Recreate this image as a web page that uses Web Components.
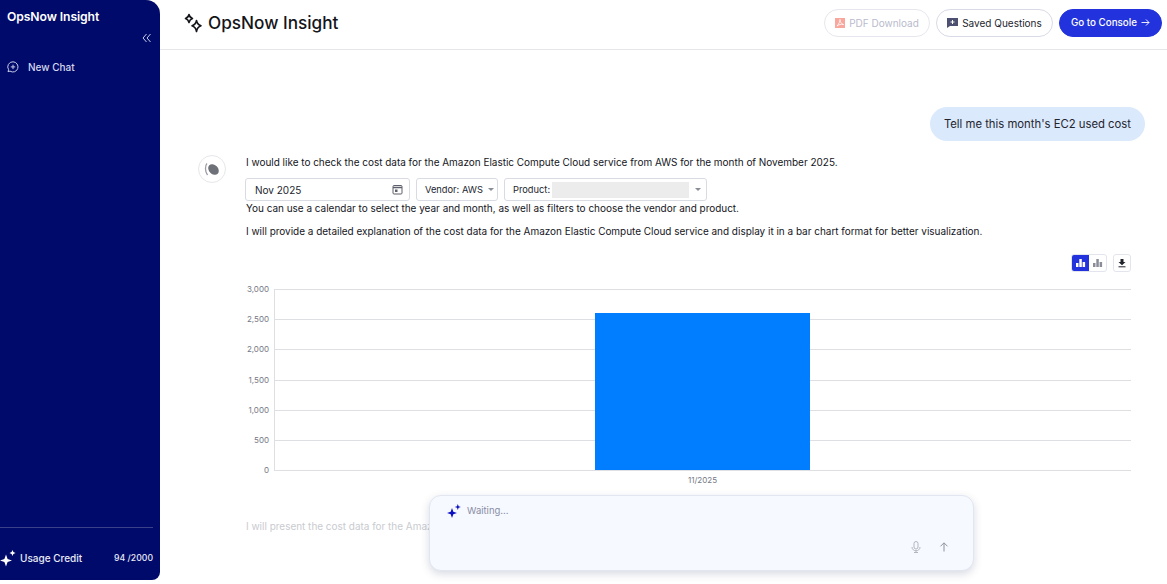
<!DOCTYPE html>
<html lang="en"><head><meta charset="utf-8"><title>OpsNow Insight</title>
<style>
html,body{margin:0;padding:0;background:#fff;width:1167px;height:584px;overflow:hidden;font-family:Inter,"Liberation Sans",sans-serif}
ops-app{display:flex;width:1167px;height:584px}
</style></head><body>
<ops-app>
  <ops-sidebar slot="side"></ops-sidebar>
  <ops-header slot="head"></ops-header>
  <user-bubble slot="body">Tell me this month's EC2 used cost</user-bubble>
  <assistant-message slot="body">
    <p class="x">I would like to check the cost data for the Amazon Elastic Compute Cloud service from AWS for the month of November 2025.</p>
    <filter-bar></filter-bar>
    <p>You can use a calendar to select the year and month, as well as filters to choose the vendor and product.</p>
    <p style="margin-top:9px">I will provide a detailed explanation of the cost data for the Amazon Elastic Compute Cloud service and display it in a bar chart format for better visualization.</p>
    <chart-tools></chart-tools>
    <cost-chart></cost-chart>
    <p style="margin-top:35px;color:#c9cbd0">I will present the cost data for the Amazon Elastic Compute Cloud service.</p>
  </assistant-message>
  <chat-input slot="over"></chat-input>
</ops-app>
<script>
const def=(n,html)=>customElements.define(n,class extends HTMLElement{connectedCallback(){if(this.shadowRoot)return;this.attachShadow({mode:'open'}).innerHTML=html;}});
def('ops-app',`<style>
:host{display:flex;position:relative}
.main{flex:1;min-width:0;display:flex;flex-direction:column}
.body{flex:1;min-height:0;overflow:hidden;display:flex;flex-direction:column;padding:57px 22px 0 38px}
</style>
<slot name="side"></slot>
<div class="main"><slot name="head"></slot><div class="body"><slot name="body"></slot></div></div>
<slot name="over"></slot>`);
def('ops-sidebar',`<style>
:host{display:flex;flex-direction:column;flex:none;width:160px;height:580px;background:#000a6a;border-radius:0 14px 8px 0;color:#fff;box-sizing:border-box}
.logo{font:600 12.200px/16px Inter,sans-serif;padding:9px 0 0 7px;letter-spacing:-.1px}
.col{display:flex;justify-content:flex-end;padding:7px 7px 0 0;height:16px}
.new{display:flex;align-items:center;gap:9px;margin:11px 0 0 7px;font:500 10px/16px Inter,sans-serif;color:#d4d7ec}
.sp{flex:1}
.foot{margin:0 7px 0 0;border-top:1px solid #3b4189;height:53px;display:flex;align-items:center;box-sizing:border-box;padding-top:8px}
.u{display:flex;align-items:center;gap:4px;font:500 10px/16px Inter,sans-serif;color:#e8eaf6}
.n{margin-left:auto;font:500 8.700px/16px Inter,sans-serif;color:#e8eaf6}
svg{display:block;flex:none}
</style>
<div class="logo">OpsNow Insight</div>
<div class="col"><svg width="12" height="12" viewBox="0 0 12 12" fill="none" stroke="#c9cde8" stroke-width="1"><path d="M5.500 2 2 6l3.500 4M9.500 2 6 6l3.500 4"/></svg></div>
<div class="new"><svg width="12" height="12" viewBox="0 0 12 12" fill="none" stroke="#c9cde8" stroke-width="1"><path d="M6 .8a5.100 5.100 0 1 1-3 9.300l-2 .6.6-2A5.100 5.100 0 0 1 6 .8Z"/><path d="M6 3.700v4.400M3.800 5.900h4.400"/></svg><span>New Chat</span></div>
<div class="sp"></div>
<div class="foot"><div class="u"><svg width="16" height="18" viewBox="0 0 16 18" fill="#fff"><path d="M6 5.500 7.600 10 12 11.500 7.600 13 6 17.500 4.400 13 0 11.500 4.400 10Z"/><path d="M12.500 1 13.400 3.100 15.500 4 13.400 4.900 12.500 7 11.600 4.900 9.500 4 11.600 3.100Z"/></svg><span>Usage Credit</span></div><div class="n">94 /2000</div></div>`);
def('ops-header',`<style>
:host{display:flex;align-items:center;flex:none;height:50px;box-sizing:border-box;border-bottom:1px solid #e5e6ea;padding:0 5px 4px 23px;color:#14151a}
.t{display:flex;align-items:center;gap:5px;font:500 17.200px/24px Inter,sans-serif}
.r{margin-left:auto;display:flex;gap:6px;align-items:center}
.b{display:flex;align-items:center;justify-content:center;gap:4px;height:28px;box-sizing:border-box;border-radius:14px;border:1px solid #d8dae6;background:#fff;font:400 10px/14px Inter,sans-serif;color:#24262f;white-space:nowrap}
.pdf{width:106px;color:#b9bbcc;border-color:#e6e7ee}
.sav{width:117px}
.go{width:103px;background:#2233dd;border-color:#2233dd;color:#fff;font-weight:500;font-size:9.800px}
svg{display:block;flex:none}
</style>
<div class="t"><svg width="20" height="20" viewBox="0 0 20 20" fill="none" stroke="#14151a" stroke-width="1.600" stroke-linejoin="round"><path d="M6 1.500C6.500 3.800 7.400 4.800 9.500 5.500 7.400 6.200 6.500 7.200 6 9.500 5.500 7.200 4.600 6.200 2.500 5.500 4.600 4.800 5.500 3.800 6 1.500Z"/><path d="M13.500 7.500C14.100 10.500 15.300 11.900 18 12.800 15.300 13.700 14.100 15.100 13.500 18.500 12.900 15.100 11.700 13.700 9 12.800 11.700 11.900 12.900 10.500 13.500 7.500Z"/></svg><span>OpsNow Insight</span></div>
<div class="r">
<div class="b pdf"><svg width="10" height="10" viewBox="0 0 10 10"><rect width="10" height="10" fill="#f9a79c"/><path d="M2 8C4 6 5 3 5 1.500 5 4 6.500 6 8.500 6.500 6 6 4 6.500 2 8Z" fill="none" stroke="#fff" stroke-width=".8"/></svg><span>PDF Download</span></div>
<div class="b sav"><svg width="11" height="10" viewBox="0 0 11 10"><path d="M0 0h11v8H3L0 10Z" fill="#4d5071"/><path d="M5.500 2v4M3.500 4h4" stroke="#fff" stroke-width="1"/></svg><span>Saved Questions</span></div>
<div class="b go"><span>Go to Console</span><svg width="9" height="9" viewBox="0 0 9 9" fill="none" stroke="#fff" stroke-width=".9"><path d="M.5 4.500h7.500M5 1.500l3 3-3 3"/></svg></div>
</div>`);
def('user-bubble',`<style>
:host{display:block;align-self:flex-end;flex:none;background:#dbe9fd;color:#23252d;border-radius:17px;height:34px;box-sizing:border-box;padding:0 14px;font:400 11.300px/34px Inter,sans-serif;white-space:nowrap}
</style><slot></slot>`);
def('assistant-message',`<style>
:host{display:flex;gap:20px;margin-top:14px;flex:none}
.av{flex:none;width:28px;height:28px;box-sizing:border-box;border:1px solid #e6e7ea;border-radius:50%;display:flex;align-items:center;justify-content:center}
.c{flex:1;min-width:0;padding-top:0}
::slotted(p){margin:0;font:400 9.960px/14px Inter,sans-serif;color:#14151c;white-space:nowrap}
::slotted(p.x){margin:0 0 9px}
</style>
<div class="av"><svg width="17" height="15" viewBox="0 0 17 15"><path d="M3 1.500C1 3.500.8 9.500 3.500 13" fill="none" stroke="#9a9ca3" stroke-width="1.300"/><ellipse cx="9.500" cy="7.500" rx="6" ry="4.500" transform="rotate(45 9.500 7.500)" fill="#6f7178"/></svg></div>
<div class="c"><slot></slot></div>`);
def('filter-bar',`<style>
:host{display:flex;gap:6px;height:23px;margin-left:-1px}
.f{display:flex;align-items:center;box-sizing:border-box;height:23px;border:1px solid #d9dbe3;border-radius:3px;background:#fff;font:400 10px/14px Inter,sans-serif;color:#24262f;white-space:nowrap}
.d{width:165px;padding:0 6px 0 9px;justify-content:space-between}
.v{width:82px;padding-left:8px;gap:5px}
.p{width:203px;padding-left:8px}
.p span{width:39px;font-size:9.300px}
.m{width:137px;height:16px;background:#ececec}
.a{width:0;height:0;border:3px solid transparent;border-top:3px solid #8a8c96;border-bottom:0}
.p .a{margin-left:6px}
.v span{font-size:9.300px}
svg{display:block}
</style>
<div class="f d"><span>Nov 2025</span><svg width="11" height="11" viewBox="0 0 11 11" fill="none" stroke="#5d606c"><rect x="1" y="1.500" width="9" height="8.500" rx="1"/><path d="M1 3.500h9" stroke-width="1.500"/><rect x="3" y="5.500" width="2.500" height="2.500" fill="#5d606c" stroke="none"/></svg></div>
<div class="f v"><span>Vendor: AWS</span><i class="a"></i></div>
<div class="f p"><span>Product:</span><div class="m"></div><i class="a"></i></div>`);
def('chart-tools',`<style>
:host{display:flex;justify-content:flex-end;margin-top:16px;gap:6px;height:18px;margin-right:14px}
.g{display:flex;border:1px solid #e3e5ee;border-radius:3px;overflow:hidden;height:18px;box-sizing:border-box}
.i{width:17px;height:16px;display:flex;align-items:center;justify-content:center;box-sizing:border-box}
.on{background:#2233dd}
.dl{width:18px;height:18px;border:1px solid #e3e5ee;border-radius:3px;display:flex;align-items:center;justify-content:center;box-sizing:border-box}
svg{display:block}
</style>
<div class="g"><div class="i on"><svg width="11" height="10" viewBox="0 0 11 10" fill="#fff"><path d="M1 5h2.500v4H1zM4.300 1h2.500v8H4.300zM7.600 4h2.500v5H7.600z"/></svg></div>
<div class="i"><svg width="11" height="10" viewBox="0 0 11 10" fill="#8a8d99"><path d="M1 5h2.500v4H1zM4.300 1h2.500v8H4.300zM7.600 4h2.500v5H7.600z"/></svg></div></div>
<div class="dl"><svg width="10" height="10" viewBox="0 0 10 10" fill="#22242c"><path d="M3.500 1h3v3h2L5 7.300 1.500 4h2z"/><path d="M1.500 8.300h7v1h-7z"/></svg></div>`);
def('cost-chart',`<style>
:host{display:block;height:204px;margin:8px 0 0 -16px;width:901px}
svg{display:block}
text{font:400 8px Inter,sans-serif;fill:#757885}
</style>
<svg width="901" height="204" viewBox="230 280 901 204">
<g stroke="#dedfe3" stroke-width="1"><path d="M274 289.500H1131M274 319.500H1131M274 349.500H1131M274 380.500H1131M274 410.500H1131M274 440.500H1131M274 470.500H1131M274.500 289V470"/></g>
<rect x="595" y="313" width="215" height="157" fill="#007eff"/>
<g text-anchor="end"><text x="269" y="292">3,000</text><text x="269" y="322">2,500</text><text x="269" y="352">2,000</text><text x="269" y="383">1,500</text><text x="269" y="413">1,000</text><text x="269" y="443">500</text><text x="269" y="473">0</text></g>
<text x="702.500" y="483" text-anchor="middle">11/2025</text>
</svg>`);
def('chat-input',`<style>
:host{display:block;position:absolute;left:429px;top:495px;width:545px;height:76px;box-sizing:border-box;background:#f6f9ff;border:1px solid #e2e6f0;border-radius:12px;box-shadow:0 3px 8px rgba(60,70,110,.2)}
.in{display:flex;flex-direction:column;height:100%;box-sizing:border-box;padding:7px 24px 17px 17px}
.w{display:flex;align-items:center;gap:6px;font:400 9.500px/16px Inter,sans-serif;color:#8a8da6}
.b{margin-top:auto;display:flex;justify-content:flex-end;gap:18px;align-items:center}
svg{display:block}
</style>
<div class="in"><div class="w"><svg width="14" height="14" viewBox="0 0 14 14" fill="#0a0fc0"><path d="M5 4 6.300 7.700 10 9 6.300 10.300 5 14 3.700 10.300 0 9 3.700 7.700Z"/><path d="M10.800 0 11.600 2.200 13.800 3 11.600 3.800 10.800 6 10 3.800 7.800 3 10 2.200Z"/></svg><span>Waiting...</span></div>
<div class="b"><svg width="10" height="12" viewBox="0 0 10 12" fill="none" stroke="#b4b6be" stroke-width="1"><rect x="3" y=".5" width="4" height="7.500" rx="2"/><path d="M1 6c0 5 8 5 8 0M5 9.500V12M3 11.500h4"/></svg><svg width="10" height="10" viewBox="0 0 10 10" fill="none" stroke="#8f919a" stroke-width="1"><path d="M5 9.500V1M1.500 4.300 5 .8l3.500 3.500"/></svg></div></div>`);
</script>
</body></html>
